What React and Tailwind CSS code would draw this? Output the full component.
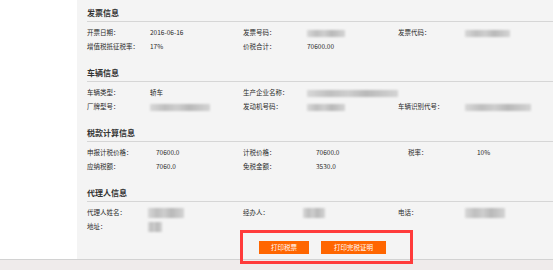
import React from 'react';

const Blur = ({ w, h = 'h-[7px]', extra = '' }) => (
  <div
    className={`${w} ${h} ${extra} blur-[1px] bg-[linear-gradient(90deg,#d8d8d8,#bfbfbf_25%,#cecece_45%,#b9b9b9_65%,#d4d4d4)]`}
  />
);

const Title = ({ children }) => (
  <div className="h-[22px] pt-[8px] border-b border-[#d6d6d6] text-[8px] leading-[10px] font-bold text-[#333]">
    {children}
  </div>
);

const Cell = ({ children }) => (
  <div className="h-[14px] flex items-center text-[6.5px] text-[#2a2a2a] whitespace-nowrap">{children}</div>
);

const App = () => {
  return (
    <div className="relative w-[553px] h-[270px] overflow-hidden bg-white font-['Noto_Sans_CJK_SC','Noto_Sans',sans-serif]">
      <div className="flex h-[259px]">
        <div className="w-[77px] bg-white" />
        <div className="flex-1 bg-[#f4f4f4] pl-[10px]">
          {/* 发票信息 */}
          <div className="h-[60px]">
            <Title>发票信息</Title>
            <div className="pt-[4px] grid grid-cols-[63px_93px_64px_91px_67px_1fr]">
              <Cell>开票日期：</Cell>
              <Cell>2016-06-16</Cell>
              <Cell>发票号码：</Cell>
              <Cell><Blur w="w-[38px]" /></Cell>
              <Cell>发票代码：</Cell>
              <Cell><Blur w="w-[45px]" /></Cell>
              <Cell>增值税抵征税率：</Cell>
              <Cell>17%</Cell>
              <Cell>价税合计：</Cell>
              <Cell>70600.00</Cell>
              <Cell />
              <Cell />
            </div>
          </div>

          {/* 车辆信息 */}
          <div className="h-[60px]">
            <Title>车辆信息</Title>
            <div className="pt-[4px] grid grid-cols-[63px_93px_64px_91px_67px_1fr]">
              <Cell>车辆类型：</Cell>
              <Cell>轿车</Cell>
              <Cell>生产企业名称：</Cell>
              <Cell><Blur w="w-[94px]" /></Cell>
              <Cell />
              <Cell />
              <Cell>厂牌型号：</Cell>
              <Cell><Blur w="w-[60px]" /></Cell>
              <Cell>发动机号码：</Cell>
              <Cell><Blur w="w-[38px]" /></Cell>
              <Cell>车辆识别代号：</Cell>
              <Cell><Blur w="w-[66px]" /></Cell>
            </div>
          </div>

          {/* 税款计算信息 */}
          <div className="h-[60px]">
            <Title>税款计算信息</Title>
            <div className="pt-[4px] grid grid-cols-[69px_87px_73px_92px_69px_1fr]">
              <Cell>申报计税价格：</Cell>
              <Cell>70600.0</Cell>
              <Cell>计税价格：</Cell>
              <Cell>70600.0</Cell>
              <Cell>税率：</Cell>
              <Cell>10%</Cell>
              <Cell>应纳税额：</Cell>
              <Cell>7060.0</Cell>
              <Cell>免税金额：</Cell>
              <Cell>3530.0</Cell>
              <Cell />
              <Cell />
            </div>
          </div>

          {/* 代理人信息 */}
          <div>
            <Title>代理人信息</Title>
            <div className="pt-[4px] grid grid-cols-[61px_95px_60px_95px_67px_1fr]">
              <Cell>代理人姓名：</Cell>
              <Cell><Blur w="w-[36px]" h="h-[10px]" /></Cell>
              <Cell>经办人：</Cell>
              <Cell><Blur w="w-[22px]" h="h-[10px]" /></Cell>
              <Cell>电话：</Cell>
              <Cell><Blur w="w-[40px]" h="h-[10px]" /></Cell>
              <Cell>地址：</Cell>
              <Cell><Blur w="w-[14px]" h="h-[10px]" /></Cell>
              <Cell />
              <Cell />
              <Cell />
              <Cell />
            </div>
          </div>

          <div className="pt-[7px] pl-[172px] flex gap-[12px]">
            <button className="w-[50px] h-[13px] bg-[#ff6600] text-white text-[6.5px] leading-[13px] text-center">
              打印税票
            </button>
            <button className="w-[65px] h-[13px] bg-[#ff6600] text-white text-[6.5px] leading-[13px] text-center">
              打印完税证明
            </button>
          </div>
        </div>
      </div>
      <div className="h-[11px] border-t border-[#d2d2d2] bg-[#efebeb]" />

      {/* annotation box */}
      <div className="absolute left-[240px] top-[230px] w-[173px] h-[34px] border-[3px] border-[#ff3b3b]" />
    </div>
  );
};

export default App;
